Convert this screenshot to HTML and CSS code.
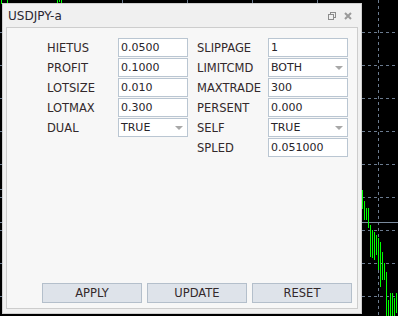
FILE: index.html
```html
<!DOCTYPE html>
<html>
<head>
<link rel="stylesheet" href="styles.css">
<title>USDJPY-a</title>
</head>
<body>
  <div class="chart">
    <svg width="398" height="316" viewBox="0 0 398 316" shape-rendering="crispEdges">
      <g stroke="#6b7b8f" stroke-width="1" stroke-dasharray="3 3">
        <line x1="378.5" y1="0" x2="378.5" y2="316"/>
        <line x1="122.5" y1="0" x2="122.5" y2="3"/>
        <line x1="187.5" y1="0" x2="187.5" y2="3"/>
        <line x1="252.5" y1="0" x2="252.5" y2="3"/>
        <line x1="317.5" y1="0" x2="317.5" y2="3"/>
        <line x1="362" y1="32.5" x2="398" y2="32.5"/>
        <line x1="362" y1="65.5" x2="398" y2="65.5"/>
        <line x1="362" y1="98.5" x2="398" y2="98.5"/>
        <line x1="362" y1="131.5" x2="398" y2="131.5"/>
        <line x1="362" y1="164.5" x2="398" y2="164.5"/>
        <line x1="362" y1="197.5" x2="398" y2="197.5"/>
        <line x1="362" y1="230.5" x2="398" y2="230.5"/>
        <line x1="362" y1="263.5" x2="398" y2="263.5"/>
        <line x1="362" y1="296.5" x2="398" y2="296.5"/>
        <line x1="0" y1="32.5" x2="2" y2="32.5"/>
        <line x1="0" y1="65.5" x2="2" y2="65.5"/>
        <line x1="0" y1="98.5" x2="2" y2="98.5"/>
        <line x1="0" y1="131.5" x2="2" y2="131.5"/>
        <line x1="0" y1="164.5" x2="2" y2="164.5"/>
        <line x1="0" y1="197.5" x2="2" y2="197.5"/>
        <line x1="0" y1="230.5" x2="2" y2="230.5"/>
        <line x1="0" y1="263.5" x2="2" y2="263.5"/>
        <line x1="0" y1="296.5" x2="2" y2="296.5"/>
      </g>
      <g stroke="#7a8a9c" stroke-width="1">
        <line x1="362" y1="222.5" x2="398" y2="222.5"/>
        <line x1="0" y1="189.5" x2="2" y2="189.5"/>
        <line x1="0" y1="222.5" x2="2" y2="222.5"/>
      </g>
      <g stroke="#00ff00" stroke-width="1">
        <line x1="1.5" y1="0" x2="1.5" y2="4"/>
        <line x1="7.5" y1="0" x2="7.5" y2="3"/>
        <line x1="57.5" y1="0" x2="57.5" y2="3"/>
        <line x1="59.5" y1="0" x2="59.5" y2="2"/>
        <line x1="61.5" y1="0" x2="61.5" y2="3"/>
        <line x1="362.5" y1="190" x2="362.5" y2="209"/>
        <line x1="364.5" y1="201" x2="364.5" y2="220"/>
        <line x1="366.5" y1="208" x2="366.5" y2="220"/>
        <line x1="368.5" y1="208" x2="368.5" y2="228"/>
        <line x1="370.5" y1="225" x2="370.5" y2="257"/>
        <line x1="372.5" y1="230" x2="372.5" y2="258"/>
        <line x1="374.5" y1="232" x2="374.5" y2="260"/>
        <line x1="376.5" y1="235" x2="376.5" y2="255"/>
        <line x1="378.5" y1="238" x2="378.5" y2="270"/>
        <line x1="380.5" y1="242" x2="380.5" y2="287"/>
        <line x1="382.5" y1="252" x2="382.5" y2="280"/>
        <line x1="384.5" y1="263" x2="384.5" y2="280"/>
        <line x1="386.5" y1="272" x2="386.5" y2="316"/>
        <line x1="388.5" y1="300" x2="388.5" y2="316"/>
        <line x1="390.5" y1="293" x2="390.5" y2="316"/>
        <line x1="392.5" y1="293" x2="392.5" y2="316"/>
        <line x1="394.5" y1="298" x2="394.5" y2="316"/>
        <line x1="396.5" y1="293" x2="396.5" y2="313"/>
      </g>
    </svg>
  </div>

  <div class="dialog">
    <div class="titlebar">
      <span class="title">USDJPY-a</span>
      <div class="tools">
        <svg class="icon" width="8" height="8" viewBox="0 0 8 8" shape-rendering="crispEdges">
          <rect x="2.5" y="0.5" width="5" height="5" fill="none" stroke="#8c8c8c"/>
          <rect x="0.5" y="2.5" width="5" height="5" fill="#f0f0f0" stroke="#8c8c8c"/>
        </svg>
        <svg class="icon" width="8" height="8" viewBox="0 0 8 8">
          <path d="M1 1 L7 7 M7 1 L1 7" stroke="#9a9a9a" stroke-width="2"/>
        </svg>
      </div>
    </div>

    <div class="panel">
      <div class="fields">
        <div class="col col-left">
          <span class="name">HIETUS</span><div class="box">0.0500</div>
          <span class="name">PROFIT</span><div class="box">0.1000</div>
          <span class="name">LOTSIZE</span><div class="box">0.010</div>
          <span class="name">LOTMAX</span><div class="box">0.300</div>
          <span class="name">DUAL</span><div class="box select">TRUE</div>
        </div>
        <div class="col col-right">
          <span class="name">SLIPPAGE</span><div class="box">1</div>
          <span class="name">LIMITCMD</span><div class="box select">BOTH</div>
          <span class="name">MAXTRADE</span><div class="box">300</div>
          <span class="name">PERSENT</span><div class="box">0.000</div>
          <span class="name">SELF</span><div class="box select">TRUE</div>
          <span class="name">SPLED</span><div class="box">0.051000</div>
        </div>
      </div>
      <div class="buttons">
        <button class="btn">APPLY</button>
        <button class="btn">UPDATE</button>
        <button class="btn">RESET</button>
      </div>
    </div>
  </div>
</body>
</html>
```

FILE: styles.css
```css
html, body { margin: 0; padding: 0; }
body { background: #000; width: 398px; height: 316px; overflow: hidden; position: relative; font-family: "DejaVu Sans", Verdana, sans-serif; color: #2e2a2a; }

.chart { position: absolute; left: 0; top: 0; }
.chart svg { display: block; }

.dialog { position: absolute; left: 2px; top: 3px; width: 358px; height: 309px; border: 1px solid #cfcfcf; background: #f0f0f0; display: flex; flex-direction: column; }

.titlebar { height: 23px; display: flex; align-items: center; padding: 1px 0 0 5px; box-sizing: border-box; }
.title { font-size: 12px; color: #2a2630; flex: 1; }
.tools { display: flex; align-items: center; gap: 8px; padding-right: 9px; }
.icon { display: block; }

.panel { flex: 1; margin: 0 3px 4px 3px; border: 1px solid #cdcdcd; background: #f7f7f7; display: flex; flex-direction: column; padding: 10px 0 5px 0; }

.fields { display: flex; padding-left: 40px; gap: 9px; align-items: flex-start; }
.col { display: grid; grid-auto-rows: 19px; row-gap: 1px; align-items: center; }
.col-left { grid-template-columns: 71px 70px; }
.col-right { grid-template-columns: 71px 80px; }

.name { font-size: 11.5px; color: #33292b; }
.box { height: 19px; box-sizing: border-box; border: 1px solid #bac6d2; background: #fff; padding-left: 2px; font-size: 11px; line-height: 17px; color: #28242a; position: relative; }
.select::after { content: ""; position: absolute; right: 4px; top: 7px; border-left: 4px solid transparent; border-right: 4px solid transparent; border-top: 4px solid #a8a8a8; }

.buttons { margin-top: auto; display: flex; gap: 5px; padding-left: 35px; }
.btn { width: 100px; height: 20px; box-sizing: border-box; border: 1px solid #b4bfcb; background: #dee3ea; font-family: "DejaVu Sans", Verdana, sans-serif; font-size: 11.5px; color: #33292b; padding: 0; }
```
